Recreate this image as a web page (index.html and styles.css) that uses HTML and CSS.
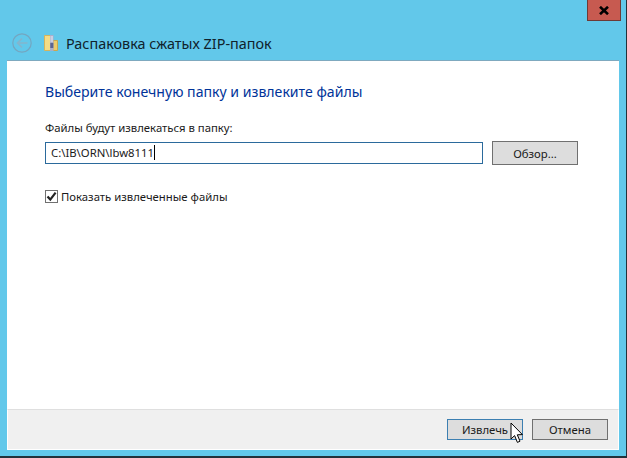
FILE: index.html
```html
<!DOCTYPE html>
<html lang="ru">
<head>
<meta charset="utf-8">
<title>Распаковка сжатых ZIP-папок</title>
<link rel="stylesheet" href="styles.css">
</head>
<body>
<div class="window">
  <div class="frame-top">
    <button class="close" aria-label="Закрыть"><svg width="10" height="9" viewBox="0 0 10 9"><path d="M1 0.8 L9 8.2 M9 0.8 L1 8.2" stroke="#000" stroke-width="2.6" fill="none"/></svg></button>
  </div>
  <div class="header">
    <svg class="back" width="20" height="20" viewBox="0 0 20 20"><circle cx="10" cy="10" r="9.2" fill="none" stroke="#74a6c0" stroke-width="1.2"/><path d="M15.5 10 H6 M10 5.5 L5.5 10 L10 14.5" fill="none" stroke="#84b5cd" stroke-width="1.7"/></svg>
    <svg class="zip" width="14" height="16" viewBox="0 0 14 16"><path d="M0.5 0.5 H6.5 V15.5 H0.5 Z" fill="#f5dc86" stroke="#d5b45c"/><path d="M9 5.5 H13.5 V15.5 H9 Z" fill="#eccb6c" stroke="#c9a84f"/><rect x="6" y="0" width="3.5" height="16" fill="#a9aecb"/><path d="M6.5 2 H9 M6.5 4 H9 M6.5 6 H9" stroke="#eef0f6"/><rect x="6.3" y="8" width="3" height="5" fill="#5d6593"/></svg>
    <span class="title">Распаковка сжатых ZIP-папок</span>
  </div>
  <div class="panel">
    <div class="content">
      <h1 class="heading">Выберите конечную папку и извлеките файлы</h1>
      <label class="label" for="path">Файлы будут извлекаться в папку:</label>
      <div class="path-row">
        <div class="input" id="path"><span>C:\IB\ORN\lbw8111</span><i class="caret"></i></div>
        <button class="btn browse">Обзор...</button>
      </div>
      <div class="check-row">
        <span class="check"><svg width="11" height="11" viewBox="0 0 11 11"><path d="M1.5 5.5 L4.3 8.6 L9.6 1.6" fill="none" stroke="#222" stroke-width="2.2"/></svg></span>
        <span>Показать извлеченные файлы</span>
      </div>
    </div>
    <div class="footer">
      <button class="btn primary">Извлечь</button>
      <button class="btn cancel">Отмена</button>
    </div>
    <svg class="cursor" width="15" height="22" viewBox="0 0 15 22"><path d="M1 1 V17 L4.6 13.6 L7.4 20.4 L10 19.2 L7.3 12.8 L12.4 12.6 Z" fill="#fff" stroke="#000" stroke-width="1"/></svg>
  </div>
</div>
</body>
</html>
```
FILE: styles.css
```css
* { box-sizing: border-box; }
html, body { margin: 0; padding: 0; }
body { width: 627px; height: 458px; overflow: hidden; background: #62c8ea; font-family: "Noto Sans", "Open Sans", sans-serif; font-size: 11.33px; color: #1a1a1a; }
.window { width: 627px; height: 458px; display: flex; flex-direction: column; padding: 0 7px 6px 7px; border-bottom: 2px solid #22323a; border-right: 1px solid #22323a; }
.frame-top { height: 21px; display: flex; justify-content: flex-end; flex: none; }
.close { width: 34px; height: 21px; margin-right: -2px; padding: 0; background: #c75a50; border: 1px solid #6d3a36; border-top: 0; display: flex; align-items: center; justify-content: center; }
.header { height: 40px; flex: none; display: flex; align-items: center; margin-left: -7px; padding: 4px 0 0 12px; }
.back { flex: none; }
.zip { flex: none; margin-left: 12px; }
.title { margin-left: 8px; font-size: 14.4px; color: #10222c; }
.panel { flex: 1; background: #fff; display: flex; flex-direction: column; position: relative; box-shadow: 0 -1px 0 #7fa9bf; }
.content { flex: 1; padding: 21px 0 0 38px; }
.heading { margin: 0; font-weight: 400; font-size: 14.1px; line-height: 20px; color: #003399; }
.label { display: block; margin-top: 17px; line-height: 17px; }
.path-row { display: flex; align-items: center; margin-top: 5px; }
.input { width: 438px; height: 22px; border: 1px solid #2b6a9c; padding: 0 0 1px 5px; display: flex; align-items: center; }
.caret { width: 1px; height: 15px; background: #000; margin-left: 0; }
.btn { font: inherit; color: inherit; background: #dddddd; border: 1px solid #707070; padding: 0; }
.browse { width: 86px; height: 24px; margin-left: 9px; }
.check-row { display: flex; align-items: center; margin-top: 24px; line-height: 15px; }
.check { width: 13px; height: 13px; border: 1px solid #707070; background: #fff; display: flex; align-items: center; justify-content: center; margin-right: 3px; }
.footer { height: 41px; flex: none; background: #f0f0f0; border: 1px solid #fff; border-top: 1px solid #dfdfdf; display: flex; justify-content: flex-end; align-items: center; gap: 9px; padding-right: 10px; }
.primary { width: 76px; height: 21px; border-color: #3c7fb1; }
.cancel { width: 76px; height: 21px; }
.cursor { position: absolute; left: 503px; top: 361px; }
```
